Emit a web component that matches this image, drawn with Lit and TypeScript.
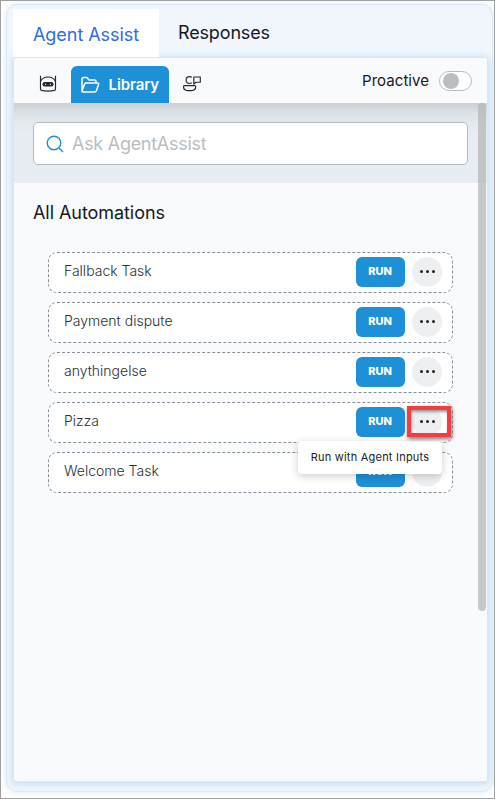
import { LitElement, html, css } from "lit";
import { customElement } from "lit/decorators.js";

@customElement("app-root")
export class AppRoot extends LitElement {
  static styles = css`
    :host { display: block; font-family: Inter, "Liberation Sans", sans-serif; color: #17191c; }
    * { box-sizing: border-box; }
    .frame { width: 495px; height: 799px; border: 1px solid #a0a0a0; padding: 3px 1px 7px 5px; background: #fff; overflow: hidden; }
    .widget { width: 487px; height: 788px; background: #f1f6fd; border: 1px solid #d9e9f5; border-radius: 12px; padding: 4px 5px 9px 6px; box-shadow: 0 0 7px #d8eaf6; }
    .tabs { display: flex; height: 48px; }
    .tab { font-size: 18px; line-height: 48px; white-space: nowrap; padding-left: 19px; letter-spacing: -.15px; }
    .tab.active { width: 146px; background: #fff; color: #2e6be6; padding-left: 20px; line-height: 51px; letter-spacing: -.05px; }
    .panel { width: 475px; height: 725px; background: #f8fafc; border: 1px solid #dfe5ea; border-radius: 3px; box-shadow: 0 1px 7px 1px #c3dcef; display: flex; flex-direction: column; }
    .bar { height: 45px; display: flex; align-items: flex-end; padding-left: 23px; flex: none; }
    .icon { width: 22px; height: 22px; margin-bottom: 8px; flex: none; fill: none; stroke: #24282c; stroke-width: 1.15; stroke-linejoin: round; }
    .library { width: 98px; height: 37px; margin: 0 12px; background: #1d90d8; border-radius: 6px 6px 0 0; color: #fff; display: flex; align-items: center; padding-left: 9px; gap: 8.5px; font-weight: 600; font-size: 15px; letter-spacing: -.1px; }
    .library svg { width: 20px; height: 18px; fill: none; stroke: #fff; stroke-width: 1.5; stroke-linejoin: round; }
    .pro { margin-left: auto; height: 44px; display: flex; align-items: center; font-size: 15px; gap: 10px; padding-right: 15px; padding-bottom: 1px; letter-spacing: .05px; }
    .switch { width: 33px; height: 20px; border: 1px solid #b9bcc0; border-radius: 10px; background: #fff; padding: 1px 3px; }
    .knob { width: 16px; height: 16px; border-radius: 50%; background: #bbbdc3; }
    .body { flex: 1; display: flex; flex-direction: column; position: relative; }
    .search { height: 80px; padding: 19px 0 0 19px; background: linear-gradient(#cbd0d4, #dce1e5 10px, #e4e9ee 20px, #e8edf4 32px); }
    .input { width: 435px; height: 43px; border: 1px solid #b5babf; border-radius: 5px; background: #fff; display: flex; align-items: center; padding-left: 12px; gap: 8px; color: #babdc1; font-size: 18px; letter-spacing: -.28px; }
    .input svg { width: 18px; height: 18px; fill: none; stroke: #1d90d8; stroke-width: 1.4; }
    h2 { margin: 18px 0 27px 19px; font-size: 18px; line-height: 24px; font-weight: 400; letter-spacing: -.06px; }
    .list { display: flex; flex-direction: column; gap: 9px; margin-left: 34px; width: 405px; }
    .row { height: 41px; border: 1px dashed #858f99; border-radius: 9px; background: #fff; display: flex; align-items: center; padding: 0 10px 1px 15px; font-size: 14px; color: #2c2f33; position: relative; }
    .name { flex: 1; padding-bottom: 4px; font-weight: 300; }
    .run { width: 49px; height: 30px; border-radius: 6px; background: #1d90d8; color: #fff; font-weight: 800; font-size: 11px; line-height: 29px; text-align: center; margin-right: 7px; padding-right: 1px; }
    .more { width: 30px; height: 30px; border-radius: 50%; background: #eeeff1; display: flex; align-items: center; justify-content: center; gap: 3px; padding-bottom: 1px; }
    .more i { width: 3px; height: 3px; border-radius: 50%; background: #202224; }
    .mark { position: absolute; left: 358px; top: 3px; width: 44px; height: 31px; border: 4px solid #f43d40; box-shadow: 1px 2px 4px #777, inset 1px 2px 3px #999; z-index: 2; }
    .tip { position: absolute; left: 249px; top: 38px; width: 144px; height: 33px; border-radius: 4px; background: #fff; box-shadow: 0 2px 9px #0003; font-size: 11px; line-height: 33px; text-align: center; white-space: nowrap; z-index: 1; letter-spacing: .22px; color: #202326; }
    .thumb { position: absolute; right: 1px; top: 0; width: 8px; height: 508px; border-radius: 4px; background: #b5b6b7bb; }
  `;

  private tasks = ["Fallback Task", "Payment dispute", "anythingelse", "Pizza", "Welcome Task"];

  render() {
    return html`<div class="frame"><div class="widget">
      <div class="tabs"><div class="tab active">Agent Assist</div><div class="tab">Responses</div></div>
      <div class="panel">
        <div class="bar">
          <svg class="icon" viewBox="0 0 22 22"><path d="M3.500 2.800V16q0 1 1 1.400 6.500 1.400 13 0 1-.4 1-1.400V2.800M3.500 8.500Q5.500 4 11 4t7.500 4.500"/><rect x="5.500" y="9" width="11" height="4.600" rx="2.300" fill="#24282c" stroke="none"/><path d="M8 11.300h1.200M12.800 11.300H14" stroke="#fff" stroke-width="1"/></svg>
          <div class="library"><svg viewBox="0 0 20 18"><path d="M2 15V3q0-1.500 1.500-1.500H7l2 2.500h5.500Q16 4 16 5.500V7M2 15l2.600-7q.4-1 1.500-1H17.500q1.500 0 1 1.500l-2 6q-.5 1.500-2 1.500H3q-1 0-1-1z"/></svg><span>Library</span></div>
          <svg class="icon" viewBox="0 0 22 22"><path d="M10.800 9.800Q9.800 10.500 8.600 10.500a3.400 3.400 0 0 1 0-6.900Q9.800 3.600 10.800 4.300M12.800 4h6.500v5.200h-4.400l-2.100 1.900zM3.500 12.600h10.200q1 0 1 1 0 4-4.200 4h-3.800q-4.200 0-4.200-4 0-1 1-1z"/></svg>
          <div class="pro"><span>Proactive</span><div class="switch"><div class="knob"></div></div></div>
        </div>
        <div class="body">
          <div class="search"><div class="input"><svg viewBox="0 0 18 18"><circle cx="8" cy="8" r="6.800"/><path d="m13 13 4 4"/></svg><span>Ask AgentAssist</span></div></div>
          <h2>All Automations</h2>
          <div class="list">${this.tasks.map((t) => html`<div class="row"><span class="name">${t}</span><div class="run">RUN</div><div class="more"><i></i><i></i><i></i></div>${t === "Pizza" ? html`<div class="mark"></div><div class="tip">Run with Agent Inputs</div>` : ""}</div>`)}</div>
          <div class="thumb"></div>
        </div>
      </div>
    </div></div>`;
  }
}
